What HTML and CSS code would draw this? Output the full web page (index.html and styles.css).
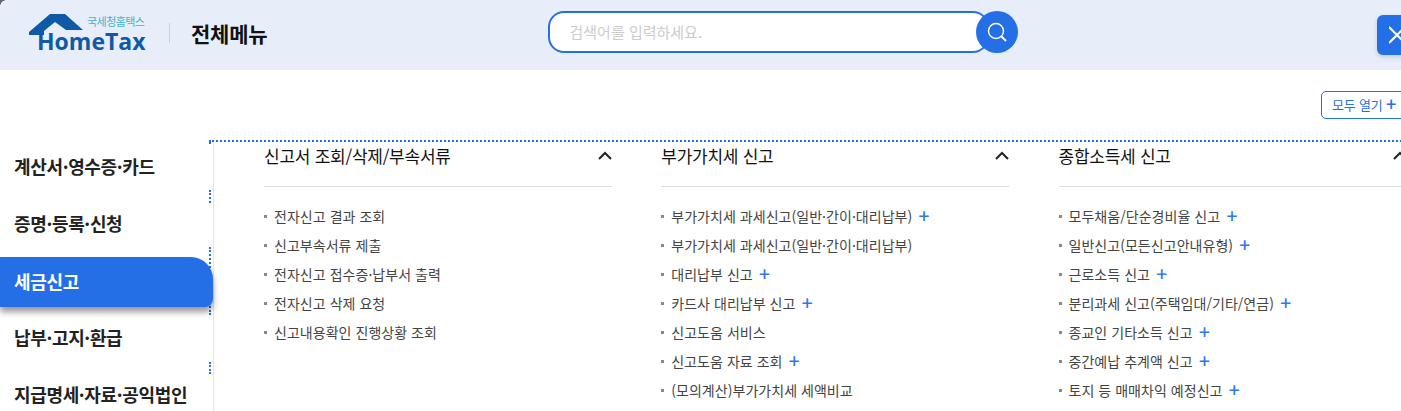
FILE: index.html
```html
<!DOCTYPE html>
<html lang="ko">
<head>
<meta charset="utf-8">
<title>전체메뉴</title>
<link rel="stylesheet" href="styles.css">
</head>
<body>
<div class="page">
  <i class="corner"></i>
  <header class="header">
    <div class="logo">
      <svg class="logo-house" width="60" height="24" viewBox="0 0 60 24" aria-hidden="true">
        <path d="M0 18 L21 0 L36 0 L54 16 L37 16 L26 8 L15 17 L15 21 L0 21 Z" fill="#0f5aa6"/>
      </svg>
      <span class="logo-sub">국세청홈택스</span>
      <span class="logo-main">HomeTax</span>
    </div>
    <h1 class="title">전체메뉴</h1>
    <form class="search">
      <span class="search-box">검색어를 입력하세요.</span>
      <span class="search-btn">
        <svg width="22" height="22" viewBox="0 0 22 22" fill="none" stroke="#fff" stroke-width="1.4" aria-hidden="true">
          <circle cx="10" cy="10" r="7.5"/><path d="M15.5 15.5 L20 20" stroke-width="1.8"/>
        </svg>
      </span>
    </form>
    <span class="close">
      <svg width="24" height="24" viewBox="0 0 24 24" fill="none" stroke="#fff" stroke-width="2" aria-hidden="true"><path d="M0 4 L16 20 M16 4 L0 20"/></svg>
    </span>
  </header>
  <div class="toolbar"><button class="open-all">모두 열기 <b>+</b></button></div>
  <div class="content">
    <nav class="side">
      <a class="side-item">계산서·영수증·카드</a>
      <a class="side-item">증명·등록·신청</a>
      <a class="side-item active">세금신고</a>
      <a class="side-item">납부·고지·환급</a>
      <a class="side-item">지급명세·자료·공익법인</a>
      <i class="dots d1"></i><i class="dots d2"></i><i class="dots d3"></i><i class="dots d4"></i>
    </nav>
    <main class="columns">
      <section class="col">
        <h2 class="col-title">신고서 조회/삭제/부속서류<svg class="chev" width="14" height="9" viewBox="0 0 14 9" aria-hidden="true"><path d="M1 8 L7 2 L13 8" fill="none" stroke="#222" stroke-width="2"/></svg></h2>
        <ul class="list">
          <li>전자신고 결과 조회</li>
          <li>신고부속서류 제출</li>
          <li>전자신고 접수증·납부서 출력</li>
          <li>전자신고 삭제 요청</li>
          <li>신고내용확인 진행상황 조회</li>
        </ul>
      </section>
      <section class="col">
        <h2 class="col-title">부가가치세 신고<svg class="chev" width="14" height="9" viewBox="0 0 14 9" aria-hidden="true"><path d="M1 8 L7 2 L13 8" fill="none" stroke="#222" stroke-width="2"/></svg></h2>
        <ul class="list">
          <li>부가가치세 과세신고(일반·간이·대리납부)<b>+</b></li>
          <li>부가가치세 과세신고(일반·간이·대리납부)</li>
          <li>대리납부 신고<b>+</b></li>
          <li>카드사 대리납부 신고<b>+</b></li>
          <li>신고도움 서비스</li>
          <li>신고도움 자료 조회<b>+</b></li>
          <li>(모의계산)부가가치세 세액비교</li>
        </ul>
      </section>
      <section class="col">
        <h2 class="col-title">종합소득세 신고<svg class="chev" width="14" height="9" viewBox="0 0 14 9" aria-hidden="true"><path d="M1 8 L7 2 L13 8" fill="none" stroke="#222" stroke-width="2"/></svg></h2>
        <ul class="list">
          <li>모두채움/단순경비율 신고<b>+</b></li>
          <li>일반신고(모든신고안내유형)<b>+</b></li>
          <li>근로소득 신고<b>+</b></li>
          <li>분리과세 신고(주택임대/기타/연금)<b>+</b></li>
          <li>종교인 기타소득 신고<b>+</b></li>
          <li>중간예납 추계액 신고<b>+</b></li>
          <li>토지 등 매매차익 예정신고<b>+</b></li>
        </ul>
      </section>
    </main>
  </div>
</div>
</body>
</html>
```
FILE: styles.css
```css
* { box-sizing: border-box; }
html, body { margin: 0; padding: 0; overflow: hidden; height: 411px; background: #fff; }
body { font-family: "Noto Sans CJK KR", "Noto Sans", sans-serif; color: #222; }
.page { width: 1401px; height: 411px; overflow: hidden; position: relative; }
.corner { position: absolute; left: 0; top: 0; width: 6px; height: 6px; z-index: 2; background: radial-gradient(circle at 100% 100%, transparent 5.5px, #666 6px); }

.header { height: 70px; background: #e7eef9; display: flex; align-items: center; padding-bottom: 4px; position: relative; }
.logo { position: relative; width: 117px; height: 38px; margin-left: 29px; flex: none; }
.logo-house { position: absolute; left: 0; top: 0; }
.logo-sub { position: absolute; left: 58px; top: 2px; font-size: 11px; line-height: 11px; color: #3fb4c8; letter-spacing: -0.55px; white-space: nowrap; }
.logo-main { position: absolute; left: 8px; top: 15px; font: 700 23px/24px "Open Sans", sans-serif; color: #0f5aa6; white-space: nowrap; }
.title { margin: 0 0 0 23px; padding-left: 21px; border-left: 1px solid #ccd2da; height: 20px; font-size: 21px; line-height: 20px; font-weight: 700; color: #111; letter-spacing: -0.2px; white-space: nowrap; flex: none; }
.search { display: flex; align-items: center; margin: -2px 0 0 281px; flex: none; position: relative; width: 470px; }
.search-box { width: 441px; height: 42px; border: 2px solid #256fe6; border-radius: 16px; background: #fff; padding-left: 19px; font-size: 15px; line-height: 38px; color: #ccc; }
.search-btn { width: 42px; height: 42px; border-radius: 50%; background: #256fe6; display: flex; align-items: center; justify-content: center; margin: -1px 0 0 -13px; position: relative; }
.close { position: absolute; left: 1377px; top: 15px; width: 40px; height: 40px; border-radius: 6px; background: #256fe6; box-shadow: 0 2px 5px rgba(0,0,0,.15); display: flex; align-items: center; padding-left: 12px; }

.toolbar { height: 70px; padding: 21px 0 0 1321px; }
.open-all { width: 90px; height: 28px; border: 1px solid #256fe6; border-radius: 5px; background: #fff; color: #256fe6; font: 13px/26px "Noto Sans CJK KR", sans-serif; letter-spacing: -0.2px; padding: 0 0 0 10px; text-align: left; white-space: nowrap; display: block; }
.open-all b { font-size: 18px; font-weight: 500; line-height: 20px; vertical-align: -1px; }

.content { display: flex; height: 271px; position: relative; }
.side { width: 214px; flex: none; border-right: 1px solid #dfe4f5; position: relative; }
.side-item { display: block; height: 57px; padding-left: 14px; font-size: 18px; line-height: 52px; font-weight: 700; color: #222; letter-spacing: -0.35px; white-space: nowrap; }
.side-item.active { position: relative; z-index: 1; background: #256fe6; color: #fff; height: 50px; line-height: 48px; margin: 3px 0 4px; border-radius: 0 22px 8px 0; box-shadow: 0 5px 6px rgba(0,0,0,.4); }
.dots { position: absolute; left: 209px; width: 0; border-left: 2px dotted #256fe6; }
.d1 { top: 0; height: 4px; }
.d2 { top: 50px; height: 13px; }
.d3 { top: 107px; height: 68px; }
.d4 { top: 222px; height: 12px; }

.columns { display: flex; gap: 49.25px; flex: none; position: relative; border-top: 2px dotted #256fe6; margin-left: -5px; padding-left: 55px; width: 1200px; height: 271px; }
.col { width: 348px; flex: none; }
.col-title { margin: 0; height: 45px; border-bottom: 1px solid #ddd; font-size: 17px; font-weight: 400; line-height: 28px; color: #111; letter-spacing: -0.25px; display: flex; justify-content: space-between; align-items: flex-start; white-space: nowrap; }
.chev { margin-top: 9px; }
.list { list-style: none; margin: 15px 0 0; padding: 0; }
.list li { height: 29px; padding-left: 10px; font-size: 14px; line-height: 29px; letter-spacing: 0.04px; color: #444; position: relative; white-space: nowrap; }
.list li::before { content: ""; position: absolute; left: 0; top: 13px; width: 3px; height: 3px; background: #888; }
.list li b { color: #2f78ea; font: 500 20px/20px "Noto Sans", sans-serif; margin-left: 6px; vertical-align: -1px; }
```
